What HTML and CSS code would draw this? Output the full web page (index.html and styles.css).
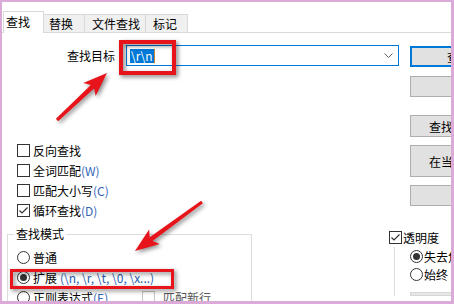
FILE: index.html
```html
<!DOCTYPE html>
<html lang="zh-CN">
<head>
    <meta charset="UTF-8">
    <meta name="viewport" content="width=device-width, initial-scale=1.0">
    <title>查找</title>
    <link rel="stylesheet" href="styles.css">
</head>
<body>
    <div class="frame">
        <div class="tabs">
            <div class="tab active">查找</div>
            <div class="tab t-replace">替换</div>
            <div class="tab t-files">文件查找</div>
            <div class="tab t-mark">标记</div>
        </div>

        <div class="panel">
            <div class="upper">
                <div class="left">
                    <div class="target-row">
                        <label class="target-label">查找目标</label>
                        <div class="combo">
                            <span class="sel">\r\n</span><span class="caret"></span>
                            <svg class="chevron" width="9" height="5" viewBox="0 0 9 5"><polyline points="0.5,0.5 4.5,4.5 8.5,0.5" fill="none" stroke="#606060" stroke-width="1"/></svg>
                        </div>
                    </div>

                    <div class="options">
                        <div class="check-row"><span class="box"></span>反向查找</div>
                        <div class="check-row"><span class="box"></span>全词匹配<span class="key">(W)</span></div>
                        <div class="check-row"><span class="box"></span>匹配大小写<span class="key">(C)</span></div>
                        <div class="check-row">
                            <span class="box"><svg width="11" height="11" viewBox="0 0 11 11"><polyline points="1.5,5.5 4,8 9.5,2.5" fill="none" stroke="#333" stroke-width="1.2"/></svg></span>循环查找<span class="key">(D)</span>
                        </div>
                    </div>
                </div>

                <div class="buttons">
                    <button type="button" class="btn btn-default">查找下一个</button>
                    <button type="button" class="btn btn-count">计数</button>
                    <button type="button" class="btn btn-all">查找所有打开文件</button>
                    <button type="button" class="btn btn-current">在当前文件中查找</button>
                    <button type="button" class="btn btn-close">关闭</button>
                </div>
            </div>

            <div class="lower">
                <fieldset class="mode">
                    <legend>查找模式</legend>
                    <div class="mode-rows">
                        <div class="check-row"><span class="radio"></span>普通</div>
                        <div class="check-row"><span class="radio on"></span>扩展 <span class="esc">(\n, \r, \t, \0, \x...)</span></div>
                        <div class="check-row">
                            <span class="regex"><span class="radio"></span>正则表达式<span class="key">(E)</span></span>
                            <span class="box disabled"></span><span class="muted">. 匹配新行</span>
                        </div>
                    </div>
                </fieldset>

                <div class="trans">
                    <div class="check-row">
                        <span class="box"><svg width="11" height="11" viewBox="0 0 11 11"><polyline points="1.5,5.5 4,8 9.5,2.5" fill="none" stroke="#333" stroke-width="1.2"/></svg></span>透明度
                    </div>
                    <div class="trans-body">
                        <div class="trans-row"><span class="radio on"></span>失去焦点后</div>
                        <div class="trans-row"><span class="radio"></span>始终</div>
                        <div class="slider"></div>
                    </div>
                </div>
            </div>
        </div>

        <!-- annotations drawn over the dialog -->
        <div class="mark mark-target"></div>
        <div class="mark mark-mode"></div>
        <svg class="arrows" width="454" height="304" viewBox="0 0 454 304">
            <polygon points="107,73 95.7,96 94.1,88.5 58.1,121.2 55.9,118.8 90.8,85 83.3,82.9" fill="#e8141b"/>
            <polygon points="135,251 159.7,244.1 152.6,241.1 202.9,203.3 201.1,200.7 149.7,237.3 149.1,229.6" fill="#e8141b"/>
        </svg>
    </div>
</body>
</html>
```

FILE: styles.css
```css
body {
    margin: 0;
    font-family: "Noto Sans CJK SC", "Liberation Sans", sans-serif;
    font-size: 12px;
    color: #000;
}

.frame {
    position: relative;
    width: 454px;
    height: 304px;
    box-sizing: border-box;
    border-style: solid;
    border-color: #dcaad9;
    border-width: 2px 3px 3px 2px;
    background-color: #fff;
    overflow: hidden;
}

/* tabs */
.tabs {
    display: flex;
    align-items: flex-end;
    height: 30px;
    padding-left: 1px;
    box-sizing: border-box;
}

.tab {
    height: 18px;
    box-sizing: border-box;
    border-top: 1px solid #d9d9d9;
    border-right: 1px solid #d9d9d9;
    background-color: #f0f0f0;
    line-height: 17px;
    white-space: nowrap;
}

.tab.active {
    position: relative;
    width: 41px;
    height: 22px;
    margin-bottom: -1px;
    padding-left: 2px;
    border-left: 1px solid #d9d9d9;
    background-color: #fff;
    line-height: 20px;
}

.t-replace { width: 41px; padding-left: 5px; }
.t-files { width: 61px; padding-left: 7px; }
.t-mark { width: 42px; padding-left: 7px; }

.panel {
    border-top: 1px solid #d9d9d9;
}

.upper {
    display: flex;
}

.left {
    flex: none;
    width: 408px;
}

/* find target */
.target-row {
    display: flex;
    align-items: center;
    height: 21px;
    margin-top: 12px;
}

.target-label {
    width: 113px;
    margin-right: 11px;
    text-align: right;
    line-height: 16px;
}

.combo {
    display: flex;
    align-items: center;
    width: 273px;
    height: 21px;
    box-sizing: border-box;
    border: 1px solid #0078d7;
    padding-left: 3px;
}

.sel {
    height: 14px;
    line-height: 14px;
    padding: 0 1px;
    background-color: #0078d7;
    color: #fff;
}

.caret {
    width: 1px;
    height: 14px;
    background-color: #c98038;
}

.chevron {
    margin-left: auto;
    margin-right: 5px;
}

/* check boxes and radios */
.options {
    margin-top: 74px;
    padding-left: 15px;
}

.check-row {
    display: flex;
    align-items: center;
    height: 20px;
    white-space: nowrap;
}

.box,
.radio {
    flex: none;
    display: flex;
    align-items: center;
    justify-content: center;
    width: 13px;
    height: 13px;
    box-sizing: border-box;
    border: 1px solid #333;
    background-color: #fff;
    margin-right: 3px;
}

.radio {
    border-radius: 50%;
}

.radio.on::after {
    content: "";
    width: 7px;
    height: 7px;
    border-radius: 50%;
    background-color: #333;
}

.box.disabled {
    border-color: #c6c6c6;
    margin-right: 2px;
}

.key {
    color: #3465b8;
}

.esc {
    margin-left: 3px;
    color: #2a5db0;
}

.muted {
    color: #555;
}

/* right buttons */
.buttons {
    flex: none;
    display: flex;
    flex-direction: column;
    width: 134px;
    padding-top: 13px;
}

.btn {
    font: inherit;
    color: #000;
    height: 21px;
    box-sizing: border-box;
    margin: 0;
    padding: 0;
    border: 1px solid #adadad;
    background-color: #e1e1e1;
    text-align: center;
    white-space: nowrap;
}

.btn-default { border: 2px solid #0078d7; }
.btn-count { margin-top: 9px; }
.btn-all { margin-top: 18px; height: 22px; }
.btn-current { margin-top: 8px; height: 32px; }
.btn-close { margin-top: 8px; }

/* search mode group */
.lower {
    display: flex;
    align-items: flex-start;
    margin-top: 7px;
}

.mode {
    flex: none;
    width: 245px;
    min-width: 0;
    box-sizing: border-box;
    margin: 0 0 0 5px;
    padding: 0;
    border: 1px solid #dcdcdc;
}

.mode legend {
    margin-left: 6px;
    padding: 0 2px;
    line-height: 14px;
}

.mode-rows {
    padding: 6px 0 0 9px;
}

.regex {
    display: flex;
    align-items: center;
    width: 125px;
}

/* transparency */
.trans {
    flex: none;
    margin-left: 137px;
}

.trans .box {
    margin-right: 1px;
}

.trans-body {
    margin-left: 5px;
    padding-left: 15px;
    border-left: 1px solid #dcdcdc;
}

.trans-row {
    display: flex;
    align-items: center;
    height: 18px;
    white-space: nowrap;
}

.trans-row .radio {
    margin-right: 1px;
}

.slider {
    width: 120px;
    height: 2px;
    margin-top: 9px;
    border: 1px solid #d6d6d6;
    background-color: #e7e7e7;
}

/* annotations */
.mark {
    position: absolute;
    box-sizing: border-box;
    border: 4px solid #e8141b;
    filter: drop-shadow(2px 2px 2px rgba(0, 0, 0, 0.5));
}

.mark-target {
    left: 117px;
    top: 38px;
    width: 57px;
    height: 35px;
}

.mark-mode {
    left: 8px;
    top: 267px;
    width: 164px;
    height: 20px;
    border-width: 3px;
}

.arrows {
    position: absolute;
    left: -2px;
    top: -2px;
    filter: drop-shadow(2px 2px 2px rgba(0, 0, 0, 0.45));
}
```
